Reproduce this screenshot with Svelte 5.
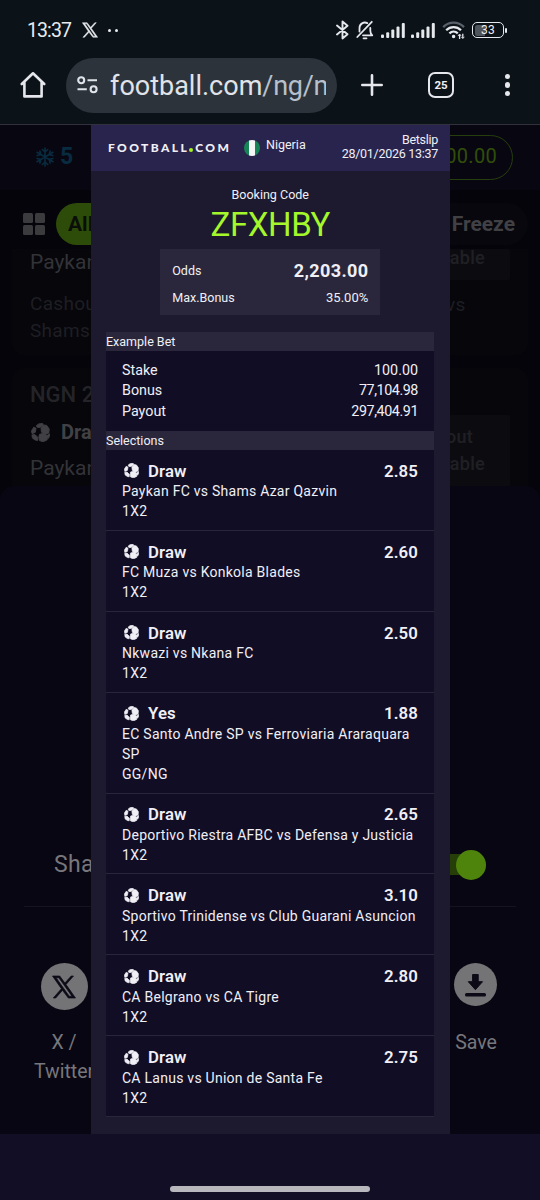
<script>
  const bets = [
    { pick: 'Draw', odds: '2.85', match: 'Paykan FC vs Shams Azar Qazvin', market: '1X2' },
    { pick: 'Draw', odds: '2.60', match: 'FC Muza vs Konkola Blades', market: '1X2' },
    { pick: 'Draw', odds: '2.50', match: 'Nkwazi vs Nkana FC', market: '1X2' },
    { pick: 'Yes', odds: '1.88', match: 'EC Santo Andre SP vs Ferroviaria Araraquara SP', market: 'GG/NG' },
    { pick: 'Draw', odds: '2.65', match: 'Deportivo Riestra AFBC vs Defensa y Justicia', market: '1X2' },
    { pick: 'Draw', odds: '3.10', match: 'Sportivo Trinidense vs Club Guarani Asuncion', market: '1X2' },
    { pick: 'Draw', odds: '2.80', match: 'CA Belgrano vs CA Tigre', market: '1X2' },
    { pick: 'Draw', odds: '2.75', match: 'CA Lanus vs Union de Santa Fe', market: '1X2' }
  ];
  const example = [['Stake', '100.00'], ['Bonus', '77,104.98'], ['Payout', '297,404.91']];
</script>

{#snippet ball(size)}
  <svg width={size} height={size} viewBox="0 0 15 15" fill="currentColor">
    <path d="M4.2 2.1 6 .7 9.2.3l.3 1.3-2.3 1.9-2.4-.1zM9.8 1.5l2.6.4 2 2.8-.3 3.2-2.5 1-3.3-1.5-.4-3.3zM2.2 3.3l1.8.9-.6 3.2-2.6 1-.4-2.3zM.7 9.4l2.4-.3 2.3 2.3-.2 2.4-1.8-.3L1.2 12zM6.7 8.9l3.5-.8 2.9 2.4-.4 2.9-3.1 1.4-3-.9-.4-2.9zM13.1 9.4l1.6-.9-.1 1.9-1 1.8-.6-1.2z" stroke="currentColor" stroke-width=".7" stroke-linejoin="round" />
  </svg>
{/snippet}

{#snippet xlogo(size)}
  <svg width={size} height={size} viewBox="0 0 24 24" fill="currentColor">
    <path fill-rule="evenodd" stroke="currentColor" stroke-width=".7" d="M.5 1h7.2l5.2 7 6.3-7h2.3l-7.5 8.5L23.5 23h-7.2l-5.8-7.7L3.7 23H1.3l8.1-9.3zm3.6 1.8 13.1 18.4h2.8L6.9 2.8z" />
  </svg>
{/snippet}

{#snippet bars()}
  <svg width="25" height="17" viewBox="0 0 25 17" fill="#e5e8ec">
    <rect x="0" y="12.5" width="3" height="3.5" rx="1" /><rect x="5.2" y="10.3" width="3" height="5.7" rx="1" />
    <rect x="10.3" y="7.6" width="3" height="8.4" rx="1" /><rect x="15.5" y="4.4" width="3" height="11.6" rx="1" />
    <rect x="20.8" y="1" width="3" height="15" rx="1" />
  </svg>
{/snippet}

<div class="phone">
  <header class="chrome">
    <div class="status">
      <span class="time">13:37</span>
      <span class="sx">{@render xlogo(16)}</span>
      <span class="dots"><i></i><i></i></span>
      <div class="sysicons">
        <svg width="13" height="20" viewBox="0 0 13 20" fill="none" stroke="#e5e8ec" stroke-width="1.9" stroke-linejoin="round" stroke-linecap="round"><path d="M1 5.5 11.5 14.2 6.5 18.5V1.5l5 4.3L1 14.5" /></svg>
        <svg class="bell" width="18" height="20" viewBox="0 0 18 20" fill="none" stroke="#e5e8ec" stroke-width="1.8" stroke-linecap="round" stroke-linejoin="round"><path d="M3.5 11.5V8a5.4 5.4 0 0 1 7.8-4.9M7 15.3h9.3c-1.7-1.5-2-2.4-2-4.6V8M1.3 17 15.8 1.8M7.5 18.3h3" /></svg>
        <span class="sig1">{@render bars()}</span>
        <span class="sig2">{@render bars()}</span>
        <svg class="wifi" width="24" height="19" viewBox="0 0 24 19" fill="none" stroke="#e5e8ec" stroke-width="2.3"><path d="M1.2 6.1c5.8-6 15-6 20.8 0" stroke="#596069" /><path d="M4.2 9.2c4.2-4.1 10.6-4.1 14.8 0M7.4 12.3c2.5-2.3 5.9-2.3 8.4 0" /><circle cx="11.6" cy="15.4" r="1.1" stroke-width="1.3" fill="#e5e8ec" /><path d="M17.6 18v-4.4M20.8 12.7v4.4" stroke-width="1.3" /><path d="m16 15 1.6-2 1.6 2m.1.8 1.5 1.8 1.5-1.8" stroke-width=".9" /></svg>
        <span class="battery"><b>33</b></span><i class="nub"></i>
      </div>
    </div>
    <div class="toolbar">
      <svg class="home" width="26" height="28" viewBox="0 0 26 28" fill="none" stroke="#e5e7ec" stroke-width="2.6" stroke-linejoin="round" stroke-linecap="round"><path d="M1.8 13 13 2.3 24.2 13M4.4 11.2v14.2h17.2V11.2" /></svg>
      <div class="url">
        <svg width="21" height="18" viewBox="0 0 21 18" fill="none" stroke="#dfe3ea" stroke-width="2.1"><circle cx="4.2" cy="4.2" r="3" /><path d="M10.5 4.2H20M.5 13.2h9.3" /><circle cx="16.6" cy="13.2" r="3" /></svg>
        <span class="addr">football.com<em>/ng/n</em></span>
      </div>
      <svg class="plus" width="22" height="22" viewBox="0 0 22 22" stroke="#e5e7ec" stroke-width="2.6" stroke-linecap="round"><path d="M11 1.3v19.4M1.3 11h19.4" /></svg>
      <span class="tabs">25</span>
      <span class="more"><i></i><i></i><i></i></span>
    </div>
  </header>

  <main>
    <div class="topstrip">
      <span class="snow"><svg width="18" height="20" viewBox="0 0 18 20" fill="none" stroke="currentColor" stroke-width="1.6" stroke-linecap="round"><path d="M9 1v18M1 5.3l16 9.4M17 5.3 1 14.7M6.3 2.5 9 5l2.7-2.5M6.3 17.5 9 15l2.7 2.5M1.2 8.6l3.6-1-.9-3.6M16.8 11.4l-3.6 1 .9 3.6M16.8 8.6l-3.6-1 .9-3.6M1.2 11.4l3.6 1L3.9 16" /></svg>5</span>
      <span class="balance">00.00</span>
    </div>
    <div class="filters">
      <span class="tiles"><i></i><i></i><i></i><i></i></span>
      <span class="all">All</span>
      <span class="freeze">Freeze</span>
    </div>
    <div class="card c1">
      <div class="cl"><p class="team">Paykan</p><p class="dim gap">Cashout</p><p class="dim">Shams</p></div>
      <div class="cr"><div class="off o1">able</div><p class="dim vs">vs</p></div>
    </div>
    <div class="card c2">
      <div class="cl"><p class="ngn">NGN 2</p><p class="pick">{@render ball(19)}Draw</p><p class="team t2">Paykan</p></div>
      <div class="off o2"><p class="out">out</p><p>able</p></div>
    </div>
    <div class="sheet">
      <div class="share"><span>Share</span><span class="switch"><i></i></span></div>
      <div class="apps">
        <div class="app a1"><span class="disc">{@render xlogo(24)}</span><p>X /<br />Twitter</p></div>
        <div class="app a2"><span class="disc small"><svg width="23" height="24" viewBox="0 0 23 24" fill="currentColor"><path d="M8.6 1.5h5.6v7.2h4.3l-7.1 8-7.1-8h4.3z" stroke="currentColor" stroke-linejoin="round" /><rect x="1" y="20" width="21" height="3.6" rx="1.6" /></svg></span><p>Save</p></div>
      </div>
    </div>

    <section class="slip">
      <div class="brand">
        <span class="logo">FOOTBALL<i></i>COM</span>
        <span class="flag"></span>
        <span class="country">Nigeria</span>
        <span class="stamp">Betslip<br />28/01/2026 13:37</span>
      </div>
      <p class="label">Booking Code</p>
      <p class="code">ZFXHBY</p>
      <div class="summary">
        <div><span>Odds</span><strong>2,203.00</strong></div>
        <div><span>Max.Bonus</span><span class="pct">35.00%</span></div>
      </div>
      <h2>Example Bet</h2>
      <div class="example">
        {#each example as [name, value]}
          <div><span>{name}</span><span class="num">{value}</span></div>
        {/each}
      </div>
      <h2>Selections</h2>
      <div class="list">
        {#each bets as bet}
          <div class="bet">
            <div class="head">{@render ball(15)}<b>{bet.pick}</b><b class="odds">{bet.odds}</b></div>
            <p class="match">{bet.match}</p>
            <p class="market">{bet.market}</p>
          </div>
        {/each}
      </div>
    </section>
  </main>
  <footer><i></i></footer>
</div>

<style>
  :global(body) { background: #110e26; }
  .phone { width: 540px; height: 1200px; overflow: hidden; background: #110e26; color: #f0eff5; font-family: Roboto, sans-serif; }
  .phone * { box-sizing: border-box; }
  p, h2 { margin: 0; }
  svg { display: block; flex: none; }
  .chrome { height: 125px; background: #0b1218; border-bottom: 1px solid #30313c; }
  .status { height: 56px; padding: 4px 33px 0 27px; display: flex; align-items: center; }
  .time { font-size: 19.5px; width: 55px; color: #e8ebef; letter-spacing: -.9px; }
  .sx { color: #e8ebef; }
  .dots { display: flex; gap: 4px; margin-left: 10px; }
  .dots i { width: 3px; height: 3px; border-radius: 50%; background: #e8ebef; }
  .sysicons { display: flex; align-items: center; margin-left: auto; }
  .bell { margin-left: 7px; }
  .sig1 { margin-left: 7px; }
  .sig2 { margin-left: 5px; }
  .wifi { margin-left: 6px; }
  .battery { width: 32px; height: 16px; margin-left: 6px; border: 1.6px solid #e5e8ec; border-radius: 5px; display: flex; align-items: center; justify-content: center; background: linear-gradient(90deg, #4e555c 10px, transparent 10px) content-box; padding: 1.5px; }
  .battery b { font-size: 12px; font-weight: 400; line-height: 12px; letter-spacing: .3px; }
  .nub { width: 2px; height: 5px; margin-left: 1px; background: #e5e8ec; border-radius: 1px; }
  .toolbar { display: flex; align-items: center; height: 58px; padding: 0 30px 0 20px; }
  .url { width: 271px; height: 55px; margin-left: 20px; padding-left: 11px; border-radius: 28px; background: #2d333a; display: flex; align-items: center; }
  .addr { margin: 1px 0 0 12px; width: 216px; overflow: hidden; white-space: nowrap; font-size: 27px; line-height: 36px; color: #e0e3e9; }
  .addr em { font-style: normal; color: #b7c0cc; letter-spacing: -.3px; }
  .plus { margin-left: 24px; }
  .tabs { width: 26px; height: 26px; margin-left: 45px; border: 2.5px solid #e5e7ec; border-radius: 7px; font-size: 11.5px; font-weight: 700; display: flex; align-items: center; justify-content: center; }
  .more { margin-left: auto; display: grid; gap: 2.8px; }
  .more i { width: 5.5px; height: 5.5px; border-radius: 50%; background: #e5e7ec; }

  main { position: relative; height: 1009px; background: #04040a; display: flex; flex-direction: column; }
  .topstrip { height: 65px; background: #080711; display: flex; align-items: center; justify-content: space-between; padding: 0 27px 0 36px; }
  .snow { display: flex; align-items: center; gap: 6px; color: #082b40; font-size: 23px; font-weight: 700; margin-top: -2px; }
  .balance { width: 150px; height: 45px; border: 1px solid #253e0b; border-radius: 23px; color: #314e0a; font-size: 20px; display: flex; align-items: center; justify-content: flex-end; padding: 0 15px 3px 0; letter-spacing: .3px; }
  .filters { height: 59px; padding: 9px 12px 0 23px; display: flex; align-items: center; font-size: 21px; font-weight: 700; }
  .tiles { display: grid; grid-template-columns: 9.5px 9.5px; gap: 2.5px; }
  .tiles i { height: 9.5px; border-radius: 1.5px; background: #3b3b3e; }
  .all { width: 60px; height: 42px; margin: 0 0 0 11.5px; border-radius: 21px; background: #2e4c09; color: #0a1009; display: flex; align-items: center; padding-left: 12px; }
  .freeze { margin-left: auto; height: 42px; width: 100px; border-radius: 21px; background: #07070d; color: #414145; display: flex; align-items: center; justify-content: flex-end; padding-right: 13px; }
  .card { margin: 0 12px; background: #06060b; padding: 0 18px; display: flex; justify-content: space-between; }
  .c1 { height: 106px; border-radius: 0 0 12px 12px; }
  .c2 { height: 119px; margin-top: 13px; border-radius: 12px 12px 0 0; }
  .team { font-size: 21px; line-height: 26px; color: #333337; }
  .dim { font-size: 19px; line-height: 27px; color: #1e1e23; letter-spacing: .3px; }
  .gap { margin-top: 15px; }
  .off { width: 150px; padding-right: 25px; background: #0c0c10; color: #202024; font-size: 18px; font-weight: 500; line-height: 27px; text-align: right; border-radius: 2px; letter-spacing: .3px; }
  .o1 { height: 31px; line-height: 17px; }
  .vs { margin: 11px 0 0 86px; }
  .ngn { margin-top: 14px; font-size: 22px; line-height: 26px; font-weight: 500; color: #242428; }
  .pick { display: flex; align-items: center; gap: 11px; margin-top: 9px; padding-left: 1px; font-size: 20px; line-height: 30px; font-weight: 700; color: #414145; }
  .t2 { margin-top: 8px; }
  .o2 { margin-top: 47px; padding-top: 8px; }
  .out { padding-right: 12px; }
  .sheet { flex: 1; margin-top: -1px; border-radius: 14px 14px 0 0; background: #080612; color: #77767b; }
  .share { height: 421px; margin: 0 24px; border-bottom: 1px solid #15131d; padding: 0 30px 25px; display: flex; justify-content: space-between; align-items: flex-end; font-size: 23px; line-height: 32px; letter-spacing: .3px; }
  .switch { width: 58px; height: 21px; margin-bottom: 6px; background: #263e08; border-radius: 11px; display: flex; align-items: center; justify-content: flex-end; }
  .switch i { width: 30px; height: 30px; flex: none; border-radius: 50%; background: #4e840b; }
  .apps { display: flex; justify-content: space-between; padding: 56px 21px 0 14px; }
  .app { width: 100px; display: flex; flex-direction: column; align-items: center; text-align: center; font-size: 19.5px; line-height: 29px; }
  .a2 { width: 88px; }
  .a2 p { padding-left: 2px; }
  .disc { width: 47px; height: 47px; border-radius: 50%; background: #747375; color: #0c0a16; display: flex; align-items: center; justify-content: center; }
  .small { width: 43px; height: 43px; margin-bottom: 4px; }
  .app p { margin-top: 18px; }

  .slip { position: absolute; left: 90.5px; top: 0; width: 359.5px; height: 1009px; background: #1d1a30; display: flex; flex-direction: column; }
  .brand { height: 46px; flex: none; background: #28244e; padding: 0 12px 0 17.5px; display: flex; align-items: center; }
  .logo { display: flex; align-items: baseline; font: 900 12px Lato, sans-serif; letter-spacing: 2.4px; width: 136px; margin-top: -2px; }
  .logo i { width: 4px; height: 4px; border-radius: 50%; background: #a4f21b; margin-right: 2px; }
  .flag { width: 16px; height: 16px; border-radius: 50%; background: linear-gradient(90deg, #168457 5px, #f3f7f6 5px 11px, #168457 11px); }
  .country { font-size: 12.5px; margin: -7px 0 0 6px; }
  .stamp { margin: -2px 0 0 auto; text-align: right; font-size: 12.5px; line-height: 14px; letter-spacing: -.28px; }
  .label { margin-top: 16px; text-align: center; font-size: 12.5px; line-height: 16px; }
  .code { text-align: center; color: #a4f72a; font-size: 33px; line-height: 38px; margin-top: 3px; height: 43px; letter-spacing: -.4px; }
  .summary { width: 220px; height: 66px; margin: 0 auto 17px; padding: 8px 12px 5px; background: #2a273c; font-size: 12.5px; flex: none; }
  .summary div { display: flex; justify-content: space-between; align-items: center; height: 27px; }
  .summary strong { font-size: 18px; letter-spacing: .4px; margin-right: -.3px; }
  .pct { font-size: 13px; }
  h2 { flex: none; margin: 0 16px 0 15.5px; height: 19px; background: #2a273c; font-size: 12.5px; line-height: 19px; font-weight: 400; }
  .example { margin: 0 16px 0 15.5px; height: 80px; flex: none; background: #110d25; padding: 9px 16px 0; font-size: 14.3px; line-height: 20.3px; }
  .num { letter-spacing: -.42px; }
  .example div:first-child .num { letter-spacing: 0; }
  .example div { display: flex; justify-content: space-between; }
  .list { margin: 0 16px 0 15.5px; background: #110d25; }
  .bet { padding: 10.3px 0 8.6px 16px; border-bottom: 1px solid #29263c; font-size: 14px; line-height: 20px; letter-spacing: .26px; }
  .match { padding-right: 14px; }
  .head { display: flex; align-items: center; height: 21px; font-size: 16.8px; letter-spacing: .1px; padding-right: 16px; }
  .head svg { margin: 0 9.5px 0 1.5px; }
  .head b { font-weight: 600; }
  .head .odds { margin-left: auto; }
  footer { height: 66px; background: #110e26; display: flex; justify-content: center; padding-top: 52px; }
  footer i { width: 200px; height: 6px; border-radius: 3px; background: #b8b7be; }
</style>
